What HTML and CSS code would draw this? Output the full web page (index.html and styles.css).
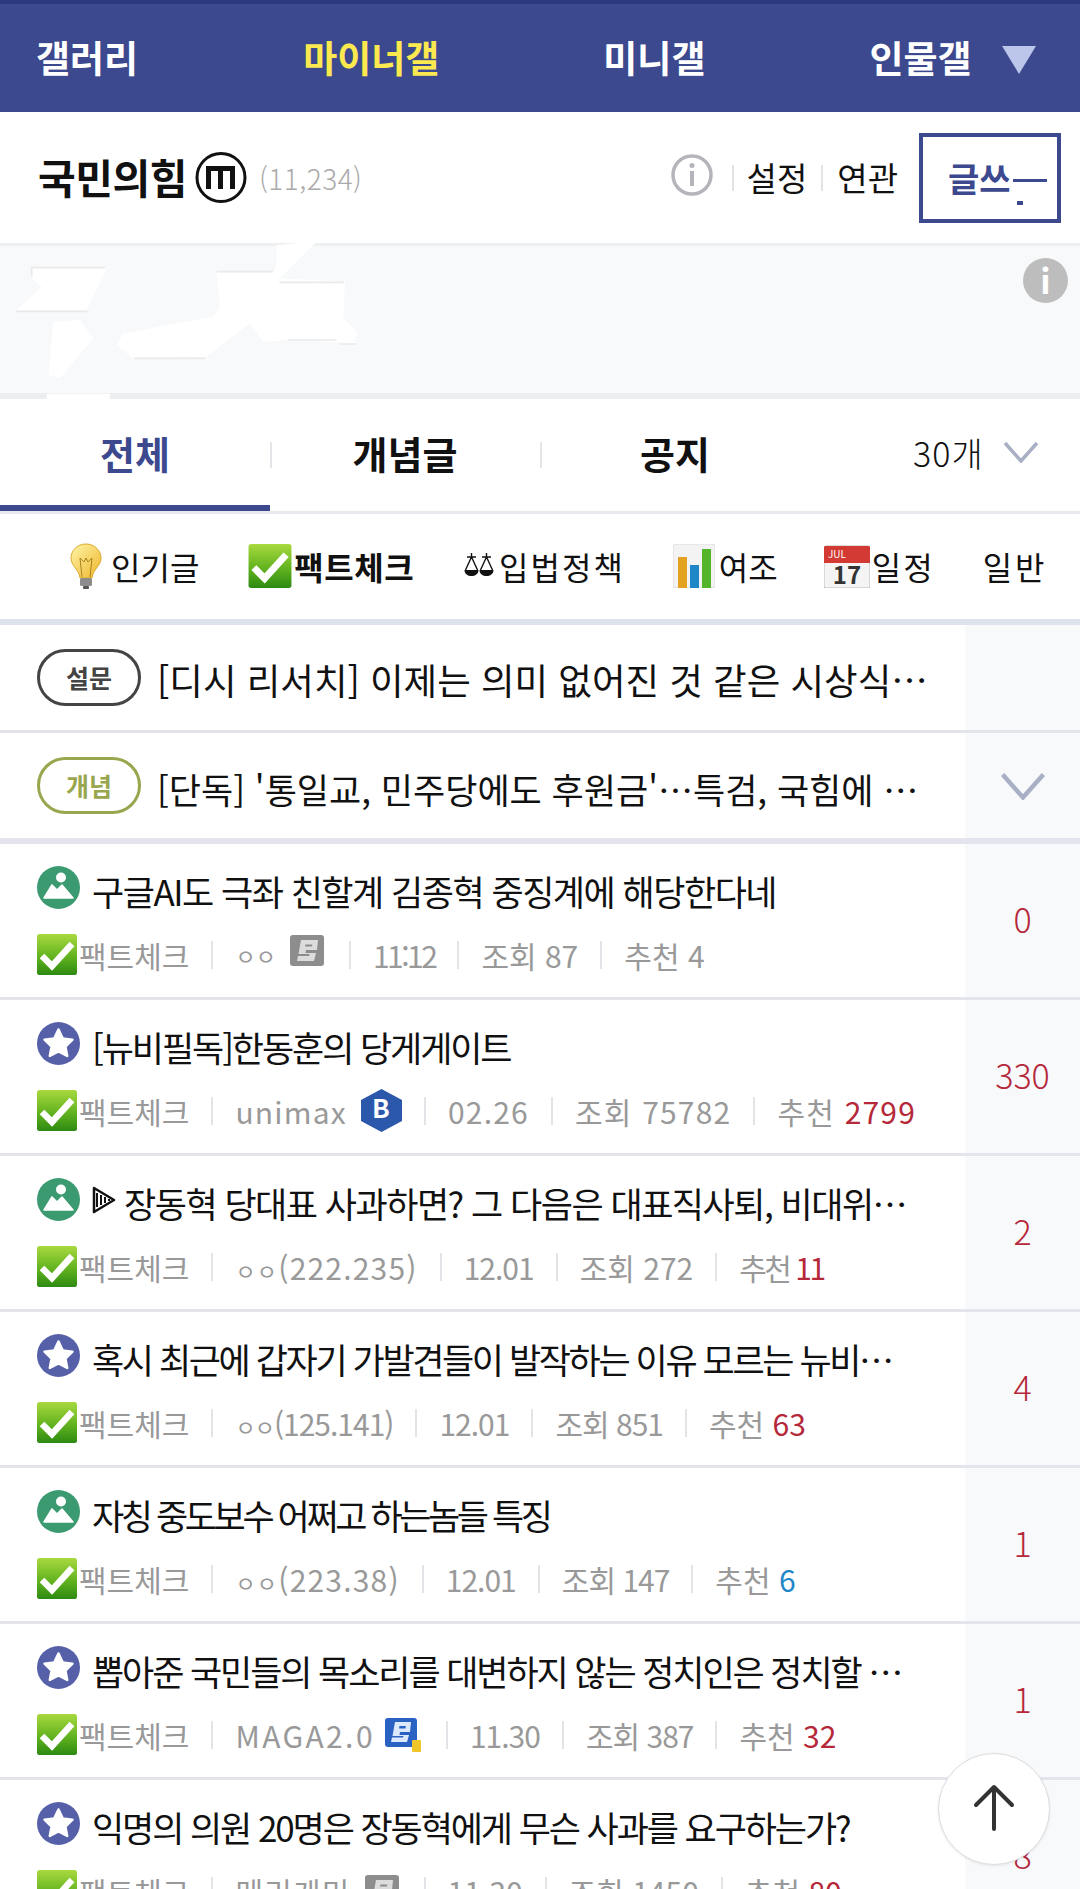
FILE: index.html

```html
<!DOCTYPE html>
<html lang="ko">
<head>
    <meta charset="UTF-8">
    <title>국민의힘 마이너 갤러리</title>
    <link rel="stylesheet" href="styles.css">
</head>
<body>
    <!-- icons used more than once -->
    <svg class="icon-defs" xmlns="http://www.w3.org/2000/svg">
        <defs>
            <linearGradient id="check-green" x1="0" y1="0" x2="0" y2="1">
                <stop offset="0" stop-color="#a9d93f"/>
                <stop offset="0.55" stop-color="#62b31f"/>
                <stop offset="1" stop-color="#2d8a12"/>
            </linearGradient>
            <linearGradient id="bulb-glass" x1="0" y1="0" x2="1" y2="1">
                <stop offset="0" stop-color="#fff6a8"/>
                <stop offset="1" stop-color="#eeb52b"/>
            </linearGradient>
        </defs>
        <symbol id="icon-check" viewBox="0 0 40 41">
            <rect width="40" height="41" rx="2.5" fill="url(#check-green)"/>
            <path d="M5 22 L15 32 L35 10" fill="none" stroke="#fff" stroke-width="6.5" stroke-linejoin="miter"/>
        </symbol>
        <symbol id="icon-image" viewBox="0 0 43 43">
            <circle cx="21.500" cy="21.500" r="21.500" fill="#3b9a70"/>
            <circle cx="24" cy="11.500" r="5" fill="#fff"/>
            <path d="M7 32 L15 19 L20 24 L25 19 L36 32 Z" fill="#fff" stroke="#fff" stroke-width="1.500" stroke-linejoin="round"/>
        </symbol>
        <symbol id="icon-star" viewBox="0 0 43 43">
            <circle cx="21.500" cy="21.500" r="21.500" fill="#5560a8"/>
            <path d="M21.500 7.500 L25.800 16.500 L35.500 17.700 L28.400 24.500 L30.200 34 L21.500 29.300 L12.800 34 L14.600 24.500 L7.500 17.700 L17.200 16.500 Z" fill="#fff" stroke="#fff" stroke-width="2.500" stroke-linejoin="round"/>
        </symbol>
        <symbol id="icon-nick-gray" viewBox="0 0 34 31">
            <rect width="34" height="31" rx="3" fill="#8d8d8d"/>
            <path d="M11 5 H28 L27 15 H16 L15.500 18 H26 L24 26 H7 L8 21 H19 L19.500 19 H8.500 Z M15.500 9.500 L15 11.500 H22 L22.300 9.500 Z" fill="#dcdcdc" fill-rule="evenodd"/>
        </symbol>
        <symbol id="icon-nick-blue" viewBox="0 0 36 34">
            <rect width="32" height="29" rx="3" fill="#2a62c4"/>
            <path d="M10 4 H26 L25 14 H15 L14.500 17 H24 L22 24 H6 L7 19.500 H18 L18.500 18 H7.500 Z M14.500 8 L14 10.500 H20.500 L20.800 8 Z" fill="#dce8fb" fill-rule="evenodd"/>
            <rect x="27" y="22" width="9" height="12" rx="1" fill="#f0c52a"/>
        </symbol>
        <symbol id="icon-chevron" viewBox="0 0 36 22">
            <path d="M2 2 L18 20 L34 2" fill="none" stroke="#a9afc4" stroke-width="3.500"/>
        </symbol>
    </svg>

    <nav class="top-nav">
        <a class="nav-link nav-gallery">갤러리</a>
        <a class="nav-link nav-minor">마이너갤</a>
        <a class="nav-link nav-mini">미니갤</a>
        <a class="nav-link nav-person">인물갤</a>
        <span class="nav-more"></span>
    </nav>

    <header class="gall-head">
        <h1 class="gall-name">국민의힘</h1>
        <svg class="manager-badge" viewBox="0 0 52 53">
            <circle cx="26" cy="26.500" r="24" fill="#fff" stroke="#111" stroke-width="3"/>
            <path d="M11 15 H40 V38 H35 V20 H28 V38 H23 V20 H16 V38 H11 Z" fill="#111"/>
        </svg>
        <span class="gall-count">(11,234)</span>
        <div class="head-links">
            <svg class="info-ring" viewBox="0 0 42 42">
                <circle cx="21" cy="21" r="19" fill="none" stroke="#b4b4ba" stroke-width="3.500"/>
                <circle cx="21" cy="11.500" r="2.500" fill="#b4b4ba"/>
                <rect x="19" y="17" width="4" height="15" fill="#b4b4ba"/>
            </svg>
            <i class="link-sep"></i>
            <a class="head-link">설정</a>
            <i class="link-sep"></i>
            <a class="head-link">연관</a>
            <a class="write-btn">글쓰<b class="write-dash"></b><b class="write-dot"></b></a>
        </div>
    </header>

    <section class="banner">
        <svg class="banner-patch" viewBox="0 0 1140 525">
            <path fill="#fff" d="M95 100 H320 L260 225 H50 L125 155 L95 130 Z"/>
            <path fill="#fff" d="M650 110 H820 L830 90 V30 L950 20 L880 90 L840 130 L1035 140 L1030 250 L1070 290 L1065 325 L870 315 L790 320 L750 265 L620 365 L400 370 L350 330 L370 295 L640 245 L660 210 Z"/>
            <path fill="#fff" d="M160 260 L240 255 L280 310 L180 430 L145 420 Z"/>
            <rect x="140" y="476" width="190" height="16" fill="#fff"/>
            <path fill="none" stroke="#e9eaec" stroke-width="5" d="M95 125 V98 H315 M650 110 H820 M838 142 H1032 M48 229 H262 M402 370 H615 M865 315 H1010 M1018 327 H1070"/>
        </svg>
        <span class="banner-info">i</span>
    </section>

    <div class="tabs">
        <a class="tab tab-on">전체</a>
        <a class="tab">개념글</a>
        <a class="tab">공지</a>
        <div class="tab-size">30개 <svg class="tab-chevron"><use href="#icon-chevron"/></svg></div>
    </div>

    <div class="filters">
        <a class="filter filter-hot">
            <svg class="filter-bulb" viewBox="0 0 32 46">
                <path d="M16 1 C7 1 1 8 1 15 C1 23 9 26 10 35 H22 C23 26 31 23 31 15 C31 8 25 1 16 1 Z" fill="url(#bulb-glass)" stroke="#dca92b"/>
                <path d="M12 34 L10 15 L14 19 L16 15 L18 19 L22 15 L20 34" fill="none" stroke="#a98221" stroke-width="1"/>
                <rect x="10" y="35" width="12" height="8" rx="1.500" fill="#8c8c8c"/>
                <rect x="13" y="43" width="6" height="3" rx="1" fill="#555"/>
            </svg>
            인기글
        </a>
        <a class="filter filter-on"><svg class="filter-check"><use href="#icon-check"/></svg>팩트체크</a>
        <a class="filter filter-law">
            <svg class="filter-scale" viewBox="0 0 30 28">
                <path d="M7.500 1 V5 M3 5 H12 M7.500 5 L1.500 18 M7.500 5 L13.500 18 M22.500 1 V5 M18 5 H27 M22.500 5 L16.500 18 M22.500 5 L28.500 18" fill="none" stroke="#111" stroke-width="1.400"/>
                <path d="M0.500 18 H14.500 C14.500 26 0.500 26 0.500 18 Z M15.500 18 H29.500 C29.500 26 15.500 26 15.500 18 Z" fill="#111"/>
            </svg>입법정책
        </a>
        <a class="filter filter-poll">
            <svg class="filter-chart" viewBox="0 0 42 44">
                <rect width="42" height="44" rx="3" fill="#f3f3f3" stroke="#ddd"/>
                <rect x="5" y="13" width="9" height="31" fill="#e3a321"/>
                <rect x="17" y="21" width="9" height="23" fill="#1f86c8"/>
                <rect x="29" y="5" width="9" height="39" fill="#54b52a"/>
            </svg>여조
        </a>
        <a class="filter filter-date">
            <svg class="filter-cal" viewBox="0 0 46 44">
                <rect y="2" width="46" height="42" rx="2" fill="#f4f4f4" stroke="#bbb"/>
                <path d="M0 3 Q0 2 2 2 H44 Q46 2 46 3 V19 H0 Z" fill="#d23a33"/>
                <text x="4" y="14" class="cal-month">JUL</text>
                <text x="23" y="40" text-anchor="middle" class="cal-day">17</text>
            </svg>일정
        </a>
        <a class="filter filter-plain">일반</a>
    </div>

    <ul class="notice-list">
        <li class="notice">
            <div class="notice-main">
                <span class="pill pill-poll">설문</span>
                <span class="notice-title">[디시 리서치] 이제는 의미 없어진 것 같은 시상식…</span>
            </div>
            <div class="post-side"></div>
        </li>
        <li class="notice">
            <div class="notice-main">
                <span class="pill pill-best">개념</span>
                <span class="notice-title notice-title-b">[단독] '통일교, 민주당에도 후원금'…특검, 국힘에 …</span>
            </div>
            <div class="post-side"><svg class="notice-chevron"><use href="#icon-chevron"/></svg></div>
        </li>
    </ul>

    <ul class="post-list">
        <li class="post">
            <div class="post-main">
                <div class="post-title"><svg class="type-icon"><use href="#icon-image"/></svg><span>구글AI도 극좌 친할계 김종혁 중징계에 해당한다네</span></div>
                <div class="post-meta">
                    <svg class="meta-check"><use href="#icon-check"/></svg><span class="meta-head">팩트체크</span>
                    <i class="sep"></i><span class="writer"><span class="jamo">ㅇㅇ</span><svg class="nick-icon nick-raised"><use href="#icon-nick-gray"/></svg></span>
                    <i class="sep"></i><span class="narrow-more">11:12</span>
                    <i class="sep"></i><span>조회 87</span>
                    <i class="sep"></i><span>추천 4</span>
                </div>
            </div>
            <div class="post-side post-count">0</div>
        </li>
        <li class="post">
            <div class="post-main">
                <div class="post-title title-s"><svg class="type-icon"><use href="#icon-star"/></svg><span>[뉴비필독]한동훈의 당게게이트</span></div>
                <div class="post-meta">
                    <svg class="meta-check"><use href="#icon-check"/></svg><span class="meta-head">팩트체크</span>
                    <i class="sep"></i><span class="writer wide">unimax<svg class="nick-badge" viewBox="0 0 41 43"><path d="M20.500 0 L41 11 V32 L20.500 43 L0 32 V11 Z" fill="#2b58ab"/><text x="20.500" y="29" text-anchor="middle" class="badge-letter">B</text></svg></span>
                    <i class="sep"></i><span class="wide">02.26</span>
                    <i class="sep"></i><span class="wide">조회 75782</span>
                    <i class="sep"></i><span class="wide">추천 <em class="up-red">2799</em></span>
                </div>
            </div>
            <div class="post-side post-count">330</div>
        </li>
        <li class="post">
            <div class="post-main">
                <div class="post-title"><svg class="type-icon"><use href="#icon-image"/></svg>
                    <svg class="head-mark" viewBox="0 0 24 28"><path d="M2 2 L22 14 L2 26 Z" fill="#fff" stroke="#111" stroke-width="2.500" stroke-linejoin="round"/><path d="M5 7 V21 M9 9 V19 M13 11 V17 M17 13 V15" stroke="#111" stroke-width="2"/></svg>
                    <span>장동혁 당대표 사과하면? 그 다음은 대표직사퇴, 비대위…</span></div>
                <div class="post-meta">
                    <svg class="meta-check"><use href="#icon-check"/></svg><span class="meta-head">팩트체크</span>
                    <i class="sep"></i><span class="wide"><span class="jamo">ㅇㅇ</span>(222.235)</span>
                    <i class="sep"></i><span class="narrow">12.01</span>
                    <i class="sep"></i><span>조회 272</span>
                    <i class="sep"></i><span class="narrow-more">추천 <em class="up-red">11</em></span>
                </div>
            </div>
            <div class="post-side post-count">2</div>
        </li>
        <li class="post">
            <div class="post-main">
                <div class="post-title title-m"><svg class="type-icon"><use href="#icon-star"/></svg><span>혹시 최근에 갑자기 가발견들이 발작하는 이유 모르는 뉴비…</span></div>
                <div class="post-meta">
                    <svg class="meta-check"><use href="#icon-check"/></svg><span class="meta-head">팩트체크</span>
                    <i class="sep"></i><span class="narrow"><span class="jamo">ㅇㅇ</span>(125.141)</span>
                    <i class="sep"></i><span class="narrow">12.01</span>
                    <i class="sep"></i><span class="narrow">조회 851</span>
                    <i class="sep"></i><span>추천 <em class="up-red">63</em></span>
                </div>
            </div>
            <div class="post-side post-count">4</div>
        </li>
        <li class="post">
            <div class="post-main">
                <div class="post-title title-l"><svg class="type-icon"><use href="#icon-image"/></svg><span>자칭 중도보수 어쩌고 하는놈들 특징</span></div>
                <div class="post-meta">
                    <svg class="meta-check"><use href="#icon-check"/></svg><span class="meta-head">팩트체크</span>
                    <i class="sep"></i><span class="wide"><span class="jamo">ㅇㅇ</span>(223.38)</span>
                    <i class="sep"></i><span class="narrow">12.01</span>
                    <i class="sep"></i><span class="narrow">조회 147</span>
                    <i class="sep"></i><span>추천 <em class="up-blue">6</em></span>
                </div>
            </div>
            <div class="post-side post-count">1</div>
        </li>
        <li class="post">
            <div class="post-main">
                <div class="post-title title-s"><svg class="type-icon"><use href="#icon-star"/></svg><span>뽑아준 국민들의 목소리를 대변하지 않는 정치인은 정치할 …</span></div>
                <div class="post-meta">
                    <svg class="meta-check"><use href="#icon-check"/></svg><span class="meta-head">팩트체크</span>
                    <i class="sep"></i><span class="writer wider">MAGA2.0<svg class="nick-icon nick-blue"><use href="#icon-nick-blue"/></svg></span>
                    <i class="sep"></i><span class="narrow">11.30</span>
                    <i class="sep"></i><span class="narrow">조회 387</span>
                    <i class="sep"></i><span>추천 <em class="up-red">32</em></span>
                </div>
            </div>
            <div class="post-side post-count">1</div>
        </li>
        <li class="post">
            <div class="post-main">
                <div class="post-title title-s"><svg class="type-icon"><use href="#icon-star"/></svg><span>익명의 의원 20명은 장동혁에게 무슨 사과를 요구하는가?</span></div>
                <div class="post-meta">
                    <svg class="meta-check"><use href="#icon-check"/></svg><span class="meta-head">팩트체크</span>
                    <i class="sep"></i><span class="writer wide">메리케미<svg class="nick-icon"><use href="#icon-nick-gray"/></svg></span>
                    <i class="sep"></i><span>11.30</span>
                    <i class="sep"></i><span>조회 1450</span>
                    <i class="sep"></i><span>추천 <em class="up-red">80</em></span>
                </div>
            </div>
            <div class="post-side post-count">8</div>
        </li>
    </ul>

    <button class="to-top" type="button">
        <svg viewBox="0 0 44 50"><path d="M22 46 V4 M4 22 L22 4 L40 22" fill="none" stroke="#333" stroke-width="4" stroke-linecap="round" stroke-linejoin="round"/></svg>
    </button>
</body>
</html>
```

FILE: styles.css

```css
* {
    box-sizing: border-box;
}

html, body {
    height: 100%;
}

body {
    margin: 0;
    padding: 0;
    position: relative;
    overflow: hidden;
    background: #fff;
    color: #111;
    font-family: "Noto Sans CJK KR", "Noto Sans", sans-serif;
}

ul {
    margin: 0;
    padding: 0;
    list-style: none;
}

em {
    font-style: normal;
}

.icon-defs {
    position: absolute;
    width: 0;
    height: 0;
}

/* top menu */
.top-nav {
    display: flex;
    align-items: center;
    height: 112px;
    border-top: 4px solid #2b3a80;
    background: #3c498e;
    padding: 0 0 2px 36px;
}

.nav-link {
    color: #fff;
    font-size: 37px;
    font-weight: 700;
    line-height: 1;
}

.nav-minor {
    margin-left: 165px;
    color: #fbe94f;
}

.nav-mini {
    margin-left: 164px;
}

.nav-person {
    margin-left: 164px;
}

.nav-more {
    margin-left: 30px;
    margin-top: 6px;
    border-left: 17px solid transparent;
    border-right: 17px solid transparent;
    border-top: 28px solid #bcc5ea;
}

/* gallery title */
.gall-head {
    display: flex;
    align-items: center;
    height: 134px;
    padding-left: 38px;
    padding-right: 19px;
    border-bottom: 3px solid #eeeff1;
}

.gall-name {
    margin: 0 0 2px;
    font-size: 41px;
    font-weight: 700;
    letter-spacing: -0.5px;
    line-height: 1;
}

.manager-badge {
    width: 52px;
    height: 53px;
    margin-left: 8px;
}

.gall-count {
    margin-left: 12px;
    color: #aaa;
    font-size: 28px;
    font-weight: 300;
    letter-spacing: 0.5px;
}

.head-links {
    display: flex;
    align-items: center;
    margin-left: auto;
}

.info-ring {
    width: 42px;
    height: 42px;
    margin-bottom: 6px;
}

.link-sep {
    width: 2px;
    height: 26px;
    margin: 0 13px 0 19px;
    background: #e3e3e3;
}

.head-link + .link-sep {
    margin: 0 14px;
}

.head-link {
    font-size: 33px;
    line-height: 1;
}

.write-btn {
    position: relative;
    display: flex;
    align-items: center;
    width: 142px;
    height: 90px;
    margin-left: 21px;
    padding-left: 25px;
    border: 4px solid #3c498e;
    color: #3c498e;
    font-size: 34px;
    font-weight: 700;
}

.write-dash {
    width: 34px;
    height: 3px;
    margin: 6px 0 0 2px;
    background: #3c498e;
}

.write-dot {
    position: absolute;
    right: 34px;
    bottom: 14px;
    width: 6px;
    height: 4px;
    background: #3c498e;
}

/* ad area, left blank */
.banner {
    position: relative;
    height: 153px;
    border-bottom: 6px solid #eceef0;
    background: #f8f9fb;
}

.banner-patch {
    position: absolute;
    left: 0;
    top: -11px;
    width: 380px;
    height: 175px;
    filter: blur(0.6px);
}

.banner-info {
    position: absolute;
    top: 12px;
    right: 12px;
    width: 45px;
    height: 45px;
    border-radius: 50%;
    background: #bdbdbd;
    color: #fff;
    font-size: 34px;
    font-weight: 700;
    line-height: 43px;
    text-align: center;
}

/* board tabs */
.tabs {
    display: flex;
    align-items: stretch;
    height: 115px;
    border-bottom: 3px solid #e8e8ee;
}

.tab {
    position: relative;
    display: flex;
    align-items: center;
    justify-content: center;
    width: 270px;
    padding-top: 2px;
    padding-bottom: 6px;
    font-size: 38px;
    font-weight: 700;
    line-height: 1;
}

.tab + .tab::before {
    content: "";
    position: absolute;
    left: 0;
    top: 43px;
    width: 2px;
    height: 26px;
    background: #e5e5e9;
}

.tab-on {
    border-bottom: 6px solid #3c498e;
    padding-bottom: 0;
    color: #3c498e;
}

.tab-size {
    display: flex;
    align-items: center;
    margin-left: 103px;
    padding-bottom: 6px;
    font-size: 34px;
    font-weight: 300;
    letter-spacing: 1px;
}

.tab-chevron {
    width: 36px;
    height: 22px;
    margin-left: 19px;
}

/* head filter */
.filters {
    display: flex;
    align-items: center;
    height: 111px;
    padding-left: 70px;
    padding-bottom: 2px;
    border-bottom: 6px solid #dfe3ee;
    font-size: 32px;
}

.filter {
    display: flex;
    align-items: center;
    line-height: 1;
}

.filter-on {
    margin-left: 49px;
    font-weight: 700;
    letter-spacing: 0.5px;
}

.filter-law {
    margin-left: 50px;
    letter-spacing: 2px;
}

.filter-poll {
    margin-left: 48px;
}

.filter-date {
    margin-left: 46px;
    letter-spacing: 2px;
}

.filter-plain {
    margin-left: 48px;
    letter-spacing: 3px;
}

.filter-bulb {
    width: 32px;
    height: 46px;
    margin-right: 9px;
}

.filter-check {
    width: 44px;
    height: 44px;
    margin-right: 2px;
}

.filter-scale {
    width: 30px;
    height: 28px;
    margin-right: 5px;
}

.filter-chart {
    width: 42px;
    height: 44px;
    margin-right: 4px;
}

.filter-cal {
    width: 46px;
    height: 44px;
    margin-right: 2px;
    letter-spacing: 0;
}

.cal-month {
    fill: #fff;
    font-size: 10px;
}

.cal-day {
    fill: #333;
    font-size: 24px;
    font-weight: 700;
}

/* notices */
.notice {
    display: flex;
    height: 108px;
    border-bottom: 3px solid #e3e4ea;
}

.notice:last-child {
    height: 111px;
    border-bottom: 6px solid #e3e4ee;
}

.notice-main {
    display: flex;
    align-items: center;
    flex: 0 0 965px;
    padding-left: 37px;
}

.pill {
    display: flex;
    align-items: center;
    justify-content: center;
    width: 104px;
    height: 57px;
    margin-right: 16px;
    border: 3px solid #444;
    border-radius: 29px;
    color: #444;
    font-size: 25px;
    font-weight: 700;
    line-height: 1;
}

.pill-best {
    border-color: #98a64e;
    color: #98a64e;
}

.notice-title {
    padding-top: 5px;
    font-size: 36.500px;
    white-space: nowrap;
    line-height: 1;
}

.notice-title-b {
    font-size: 35px;
}

.post-side {
    flex: 1;
    display: flex;
    align-items: center;
    justify-content: center;
    background: #f8f9fb;
}

.notice-chevron {
    width: 46px;
    height: 28px;
}

/* posts */
.post {
    display: flex;
    height: 156px;
    border-bottom: 3px solid #e3e4ec;
}

.post-main {
    flex: 0 0 965px;
    min-width: 0;
    padding: 22px 0 0 37px;
}

.post-title {
    display: flex;
    align-items: center;
    height: 43px;
    font-size: 35px;
    letter-spacing: -1.500px;
    white-space: nowrap;
    line-height: 1;
}

.post-title span {
    padding-top: 5px;
}

/* long and short subjects need a little more squeeze */
.title-s {
    letter-spacing: -2.100px;
}

.title-m {
    letter-spacing: -2.400px;
}

.title-l {
    letter-spacing: -3.400px;
}

.type-icon {
    flex: none;
    width: 43px;
    height: 43px;
    margin-right: 12px;
}

.head-mark {
    flex: none;
    width: 24px;
    height: 28px;
    margin-right: 8px;
}

.post-meta {
    display: flex;
    align-items: center;
    gap: 22px;
    height: 41px;
    margin-top: 25px;
    color: #999;
    font-size: 30px;
    white-space: nowrap;
    line-height: 1;
}

.meta-check {
    flex: none;
    width: 40px;
    height: 41px;
    margin-right: -20px;
}

.sep {
    flex: none;
    width: 2px;
    height: 28px;
    background: #e4e4e8;
}

.jamo {
    font-size: 22px;
}

.wide {
    letter-spacing: 1.200px;
}

.wider {
    letter-spacing: 2.400px;
}

.narrow {
    letter-spacing: -1px;
}

.narrow-more {
    letter-spacing: -2.500px;
}

.writer {
    display: flex;
    align-items: center;
}

.nick-icon {
    width: 34px;
    height: 31px;
    margin-left: 14px;
    margin-right: 3px;
}

.nick-raised {
    margin-bottom: 8px;
}

.nick-blue {
    width: 36px;
    height: 34px;
    margin-left: 10px;
}

.nick-badge {
    width: 41px;
    height: 43px;
    margin-left: 14px;
}

.badge-letter {
    fill: #fff;
    font-size: 26px;
    font-weight: 700;
}

.up-red {
    color: #b5283a;
}

.up-blue {
    color: #1f86c8;
}

.post-count {
    padding-bottom: 5px;
    color: #b5283a;
    font-size: 34px;
    font-weight: 300;
}

/* floating up button */
.to-top {
    position: absolute;
    left: 938px;
    top: 1753px;
    display: flex;
    align-items: center;
    justify-content: center;
    width: 112px;
    height: 112px;
    padding: 0;
    border: 1px solid #ddd;
    border-radius: 50%;
    background: #fff;
    box-shadow: 0 1px 3px rgba(0, 0, 0, 0.08);
}

.to-top svg {
    width: 44px;
    height: 50px;
    margin-bottom: 3px;
}
```
